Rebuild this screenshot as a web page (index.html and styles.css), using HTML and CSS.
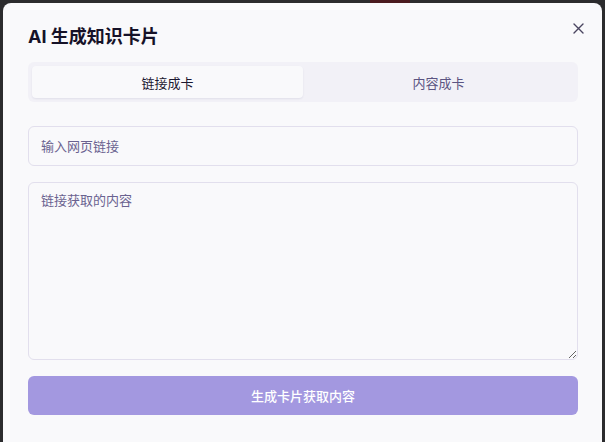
FILE: index.html
```html
<!DOCTYPE html>
<html lang="zh-CN">
<head>
    <meta charset="UTF-8">
    <meta name="viewport" content="width=device-width, initial-scale=1.0">
    <title>AI 生成知识卡片</title>
    <link rel="stylesheet" href="styles.css">
</head>
<body>
    <div class="backdrop-mark"></div>
    <div class="modal">
        <button class="close" aria-label="关闭">
            <svg width="11" height="11" viewBox="0 0 11 11">
                <path d="M1 1 L10 10 M10 1 L1 10" stroke="#4a4560" stroke-width="1.4" stroke-linecap="round"/>
            </svg>
        </button>
        <h2 class="title">AI 生成知识卡片</h2>
        <div class="tabs">
            <div class="tab active">链接成卡</div>
            <div class="tab">内容成卡</div>
        </div>
        <input class="field" type="text" placeholder="输入网页链接">
        <textarea class="field area" placeholder="链接获取的内容"></textarea>
        <button class="submit">生成卡片获取内容</button>
    </div>
</body>
</html>
```

FILE: styles.css
```css
html, body {
    height: 100%;
}

body {
    margin: 0;
    padding: 0;
    overflow: hidden;
    background-color: #2b2b2d;
    font-family: Inter, "Noto Sans CJK SC", sans-serif;
    color: #1b1730;
}

/* bit of the page behind the dialog peeking out at the top */
.backdrop-mark {
    position: absolute;
    top: 0;
    left: 370px;
    width: 40px;
    height: 3px;
    background-color: #4a1a1e;
}

.modal {
    position: relative;
    box-sizing: border-box;
    width: 599px;
    height: 460px;
    margin: 3px 0 0 3px;
    padding: 24px 24px 0 25px;
    background-color: #f9f9fb;
    border-radius: 8px;
    display: flex;
    flex-direction: column;
}

.close {
    position: absolute;
    top: 15px;
    right: 14px;
    width: 20px;
    height: 20px;
    padding: 0;
    border: none;
    background: none;
    display: flex;
    align-items: center;
    justify-content: center;
    cursor: pointer;
}

.title {
    margin: 0;
    font-size: 18px;
    line-height: 20px;
    font-weight: 700;
    color: #161228;
}

.tabs {
    margin-top: 15px;
    height: 40px;
    box-sizing: border-box;
    padding: 4px;
    background-color: #f2f1f7;
    border-radius: 6px;
    display: flex;
}

.tab {
    flex: 1;
    display: flex;
    align-items: center;
    justify-content: center;
    font-size: 13px;
    color: #5b5482;
    border-radius: 4px;
}

.tab.active {
    background-color: #f9f9fb;
    color: #1b1730;
    box-shadow: 0 1px 2px rgba(30, 20, 80, 0.08);
}

.field {
    box-sizing: border-box;
    width: 100%;
    margin: 24px 0 0 0;
    height: 40px;
    padding: 0 12px;
    border: 1px solid #e2dfed;
    border-radius: 6px;
    background-color: #f9f9fb;
    font-family: Inter, "Noto Sans CJK SC", sans-serif;
    font-size: 13px;
    color: #1b1730;
    outline: none;
}

.field::placeholder {
    color: #6a6290;
}

.area {
    margin-top: 16px;
    height: 178px;
    padding: 8px 12px;
    resize: vertical;
    line-height: 18px;
}

.submit {
    margin-top: 16px;
    height: 39px;
    border: none;
    border-radius: 6px;
    background-color: #a398e0;
    color: #ffffff;
    font-family: Inter, "Noto Sans CJK SC", sans-serif;
    font-size: 13px;
    font-weight: 500;
    cursor: pointer;
}
```
